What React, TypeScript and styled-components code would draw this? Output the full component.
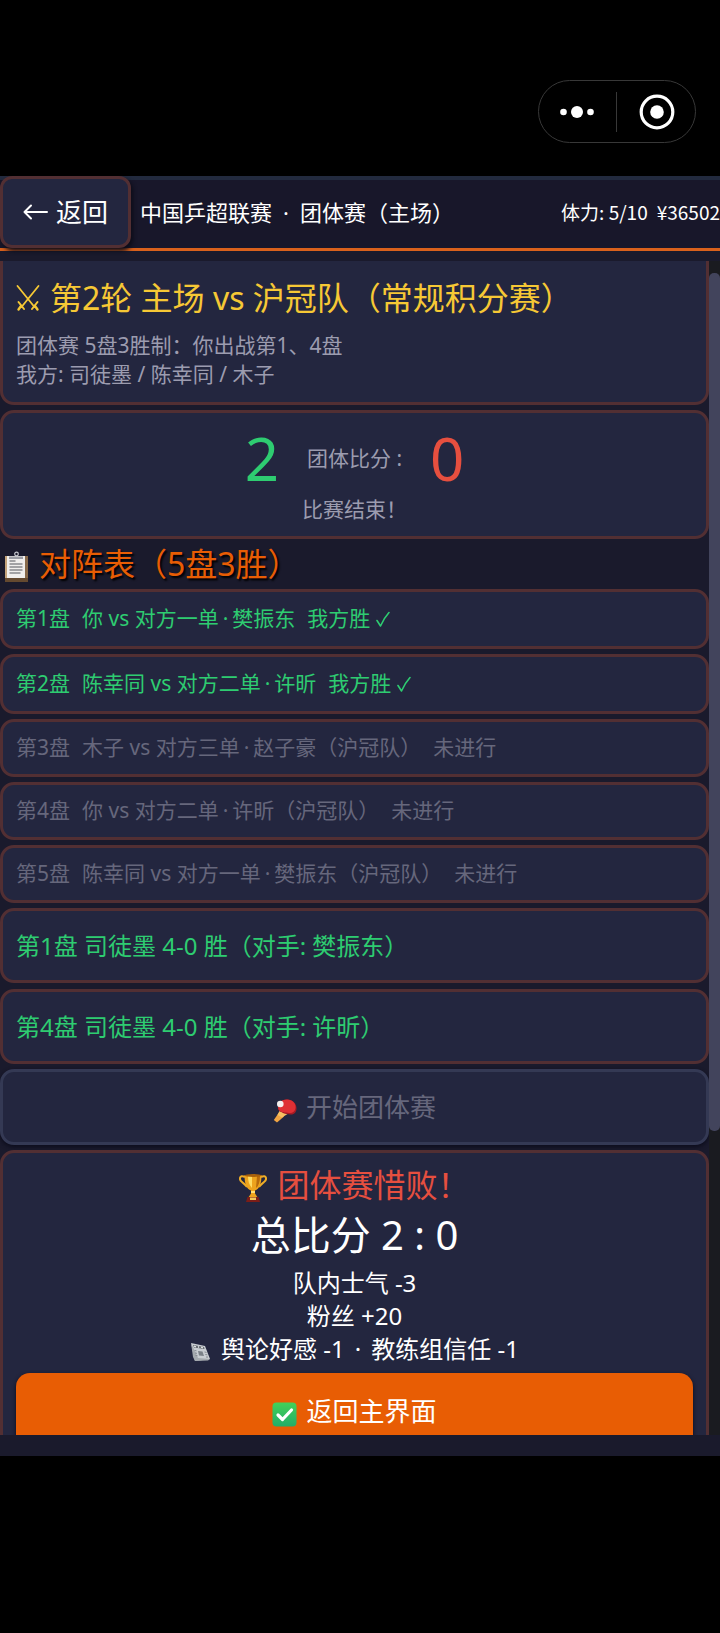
import React from 'react';
import styled, { createGlobalStyle } from 'styled-components';

const ORANGE = '#e85d04';
const EDGE = '#522f33';
const CARD = '#23263f';
const NIGHT = '#1a1a2c';
const GREEN = '#2ecc71';
const RED = '#e64f3f';
const MUTED = '#9c9caf';
const DIM = '#66677c';

const GlobalStyle = createGlobalStyle`
  * { box-sizing: border-box; }
  body { margin: 0; background: #000; }
  button { font: inherit; cursor: pointer; }
`;

const Page = styled.div`
  display: flex;
  flex-direction: column;
  height: 100vh;
  background: #000;
  color: #fff;
  font-family: 'Noto Sans', 'Noto Sans CJK SC', sans-serif;
`;

const SystemBar = styled.div`
  display: flex;
  justify-content: flex-end;
  flex: none;
  padding: 80px 24px 33px;
`;

const Capsule = styled.div`
  display: flex;
  align-items: center;
  width: 158px;
  height: 63px;
  border: 1px solid #383838;
  border-radius: 32px;
`;

const CapsuleButton = styled.button`
  display: flex;
  align-items: center;
  justify-content: center;
  flex: 1;
  height: 100%;
  padding: 0;
  border: 0;
  background: none;
`;

const CapsuleDivider = styled.span`
  width: 1px;
  height: 40px;
  margin-right: 2px;
  background: #383838;
`;

const Game = styled.div`
  display: flex;
  flex-direction: column;
  flex: 1;
  min-height: 0;
  padding-bottom: 21px;
  background: ${NIGHT};
`;

const HomeArea = styled.div`
  flex: none;
  height: 177px;
`;

const Header = styled.header`
  display: flex;
  align-items: center;
  flex: none;
  height: 75px;
  border-bottom: 3px solid #d9611c;
  background: linear-gradient(#222a3e 4px, #18172a 4px);
  white-space: nowrap;
`;

const BackButton = styled.button`
  display: flex;
  align-items: center;
  justify-content: center;
  gap: 8px;
  width: 131px;
  height: 72px;
  flex: none;
  padding: 0;
  border: 3px solid ${EDGE};
  border-radius: 12px;
  background: ${CARD};
  color: #fff;
  font-size: 26px;
  line-height: 36px;
  box-shadow: 2px 3px 4px #0c0c18;
`;

const HeaderTitle = styled.h1`
  display: flex;
  gap: 11px;
  margin: 0 0 0 9px;
  flex: 1;
  font-size: 22px;
  font-weight: 400;
  line-height: 30px;
`;

const Stats = styled.div`
  display: flex;
  gap: 9px;
  font-family: 'Noto Sans CJK SC', sans-serif;
  font-size: 19px;
  line-height: 26px;
`;

const Viewport = styled.div`
  display: flex;
  flex: 1;
  min-height: 0;
  margin-top: 10px;
  overflow: hidden;
`;

const Content = styled.main`
  flex: 1;
  min-width: 0;
`;

const Track = styled.div`
  width: 11px;
  flex: none;
  padding: 12px 0 304px;
  background: #1a1b20;
`;

const Thumb = styled.div`
  height: 100%;
  border-radius: 5px;
  background: #42445c;
`;

const Card = styled.section<{ $continued?: boolean; $centered?: boolean }>`
  padding: ${(p) => (p.$continued ? '16px 13px 13px' : '11px 13px 12px')};
  margin-bottom: 5px;
  border: 3px solid ${EDGE};
  border-top-width: ${(p) => (p.$continued ? 0 : 3)}px;
  border-radius: ${(p) => (p.$continued ? '0 0 14px 14px' : '14px')};
  background: ${CARD};
  text-align: ${(p) => (p.$centered ? 'center' : 'left')};
`;

const MatchTitle = styled.h2`
  display: flex;
  align-items: center;
  gap: 10px;
  margin: 0 0 12px;
  color: #f6c835;
  font-size: 32px;
  font-weight: 400;
  line-height: 42px;
`;

const Note = styled.p`
  margin: 0;
  color: ${MUTED};
  font-size: 21px;
  line-height: 29px;
`;

const ScoreLine = styled.div`
  display: flex;
  align-items: center;
  justify-content: center;
  gap: 28px;
  height: 68px;
  margin-bottom: 3px;
`;

const Score = styled.span<{ $color: string }>`
  color: ${(p) => p.$color};
  font-size: 60px;
  line-height: 66px;
`;

const SectionTitle = styled.h2`
  display: flex;
  align-items: center;
  gap: 10px;
  height: 50px;
  margin: -5px 0 0;
  padding-left: 4px;
  color: ${ORANGE};
  font-size: 32px;
  font-weight: 400;
  line-height: 42px;
  text-shadow: 2px 2px 2px #000;
`;

const List = styled.ul<{ $gap: number }>`
  display: flex;
  flex-direction: column;
  gap: ${(p) => p.$gap}px;
  margin: 0 0 5px;
  padding: 0;
  list-style: none;
`;

const Row = styled.li<{ $kind: 'won' | 'pending' | 'result' }>`
  display: flex;
  align-items: center;
  gap: 12px;
  height: ${(p) => ({ won: 60, pending: 58, result: 75 })[p.$kind]}px;
  padding: 0 13px 1px;
  border: 3px solid ${EDGE};
  border-radius: 14px;
  background: ${CARD};
  color: ${(p) => (p.$kind === 'pending' ? DIM : GREEN)};
  font-size: ${(p) => (p.$kind === 'result' ? 24 : 21)}px;
  line-height: ${(p) => (p.$kind === 'result' ? 33 : 29)}px;
  white-space: nowrap;
`;

const Dot = styled.span`
  padding: 0 4px;
`;

const Outcome = styled.span`
  display: flex;
  align-items: center;
  gap: 6px;
`;

const ActionButton = styled.button<{ $primary?: boolean }>`
  display: flex;
  align-items: center;
  justify-content: center;
  gap: 9px;
  width: 100%;
  height: 76px;
  margin: 0 0 5px;
  border: ${(p) => (p.$primary ? '0' : '3px solid #343954')};
  border-radius: 14px;
  background: ${(p) => (p.$primary ? ORANGE : CARD)};
  color: ${(p) => (p.$primary ? '#fff' : DIM)};
  font-size: 26px;
  line-height: 36px;
  box-shadow: 0 2px 4px #0c0c1c;
`;

const Verdict = styled.h2`
  display: flex;
  align-items: center;
  justify-content: center;
  gap: 10px;
  margin: 0;
  color: ${RED};
  font-size: 32px;
  font-weight: 400;
  line-height: 42px;
`;

const Total = styled.p`
  margin: 0 0 2px;
  font-size: 40px;
  line-height: 58px;
`;

const Effect = styled.p`
  display: flex;
  align-items: center;
  justify-content: center;
  gap: 10px;
  margin: 0;
  font-size: 24px;
  line-height: 33px;
`;

const Effects = styled.div`
  margin-bottom: 8px;
`;

/* Emoji sit a little below the optical centre of the text beside them. */
const Emoji = styled.svg`
  flex: none;
  margin-top: 6px;
`;

const BackArrow = () => (
  <svg width="25" height="18" viewBox="0 0 25 18" fill="none" stroke="currentColor" strokeWidth="2" strokeLinecap="round" strokeLinejoin="round">
    <path d="M1.500 9 H24 M8 2.500 L1.500 9 L8 15.500" />
  </svg>
);

const SwordsIcon = () => (
  <svg width="24" height="28" viewBox="0 0 24 28" fill="none" stroke="currentColor" strokeLinecap="round">
    <path d="M1.500 2 L18.500 23 M22.500 2 L5.500 23" strokeWidth="1.800" />
    <path d="M2.500 18 L8 25 M21.500 18 L16 25" strokeWidth="2" />
    <path d="M5 22 L2.500 25.500 M19 22 L21.500 25.500" strokeWidth="2.400" />
  </svg>
);

const TickIcon = () => (
  <svg width="14" height="20" viewBox="0 0 14 20" fill="none" stroke="currentColor" strokeWidth="1.600" strokeLinejoin="round" strokeLinecap="round">
    <path d="M1 11.500 L4.500 17 Q8 9 13 3.500" />
  </svg>
);

const ClipboardIcon = () => (
  <Emoji width="25" height="32" viewBox="0 0 25 32">
    <path d="M1 5h23v26H1z" fill="#87694a" />
    <path d="M1 27h23v4H1z" fill="#64492f" />
    <path d="M1 27V5h2v22z" fill="#c3a27a" />
    <path d="M3 5h18v22H3z" fill="#f0eeec" />
    <path d="M5.500 10h6M5.500 13h13M5.500 16h13M5.500 19h13M5.500 22h11" stroke="#55565c" strokeWidth="1.200" />
    <path d="M5 5.500h14V8H5z" fill="#9b9ca4" />
    <circle cx="12.500" cy="3" r="1.800" fill="none" stroke="#c8c9d0" strokeWidth="1.200" />
  </Emoji>
);

const PaddleIcon = () => (
  <Emoji width="24" height="25" viewBox="0 0 24 25">
    <path d="M6 14.500 L11 18.500 L4 24.500 L.8 22 Z" fill="#f0a443" />
    <path d="M6.500 13 L4.500 17 L9 19.500 L14.500 16 Z" fill="#f7c063" />
    <path d="M5.500 12 C3.500 5 8 1.500 14 1.500 C20 1.500 24 6 23.500 11 C23 15.500 20 17 17 16.500 C13 16 9 15.500 5.500 12 Z" fill="#a61b24" />
    <path d="M5.500 11.500 C4 5 8 1.500 14 1.500 C19.500 1.500 23 5.500 22.500 10 C22 14 19 15.500 16 15 C12 14.500 8.500 15 5.500 11.500 Z" fill="#df3034" />
    <circle cx="7.300" cy="6" r="3.300" fill="#f4efee" />
  </Emoji>
);

const TrophyIcon = () => (
  <Emoji width="28" height="30" viewBox="0 0 28 30">
    <path d="M6 4 C0 1 0 7 3 9 C5 11 6 11 8 14 M22 4 C28 1 28 7 25 9 C23 11 22 11 20 14" fill="none" stroke="#efad27" strokeWidth="2" />
    <path d="M5.500 2h17c0 9-2 14-6.500 15.500v3l3 4.500h-10l3-4.500v-3C7.500 16 5.500 11 5.500 2z" fill="#eda31d" />
    <path d="M9 3h4v12C10 12 9 8 9 3z" fill="#ffdc63" />
    <path d="M18 3h3c0 6-1.500 10-4 12z" fill="#b96b0c" />
    <ellipse cx="14" cy="2.500" rx="8.500" ry="1.500" fill="#a8610c" />
    <path d="M12 18h4v2h-4z" fill="#ffdf75" />
    <path d="M8.500 24h11l1.500 5H7z" fill="#7b1d17" />
    <path d="M11 24.500h6v2.500h-6z" fill="#f1c65a" />
  </Emoji>
);

const NewspaperIcon = () => (
  <Emoji width="21" height="20" viewBox="0 0 21 20">
    <path d="M1 1 L15 4 L20 17 L5 19 Z" fill="#c9cdd2" />
    <path d="M1 1 L3 15 L5 19 L18 18.500 L20 17 L8 16 Z" fill="#a4a9ae" />
    <path d="M3 3 L14 5 L14.500 7 L4 5.500 Z" fill="#5d6269" />
    <path d="M8 9 L12.500 9.500 L14 14 L9 13.500 Z" fill="#7b8188" />
    <path d="M4.500 8.500l2 .3M5 11l2 .3M5.500 13.500l2 .2M14.500 10l2 .4M15.300 12.500l2 .3M16 15l2 .1" stroke="#868b92" />
    <path d="M4 4l2 1M8 4.500l1 1M11 5l2 1" stroke="#edf0f2" strokeWidth="1.200" />
  </Emoji>
);

const CheckBoxIcon = () => (
  <Emoji width="25" height="25" viewBox="0 0 25 25">
    <defs>
      <linearGradient id="leaf" x1="0" y1="0" x2="0" y2="1">
        <stop offset="0" stopColor="#43d158" />
        <stop offset="1" stopColor="#23ad68" />
      </linearGradient>
    </defs>
    <rect x=".5" y=".5" width="24" height="24" rx="4" fill="url(#leaf)" />
    <path d="M6 13 L10.500 17.500 L19.500 8" fill="none" stroke="#fff" strokeWidth="3.200" strokeLinecap="round" strokeLinejoin="round" />
  </Emoji>
);

type Match = { round: string; seat: string; player: string };

const wonMatches: Match[] = [
  { round: '第1盘', seat: '你 vs 对方一单', player: '樊振东' },
  { round: '第2盘', seat: '陈幸同 vs 对方二单', player: '许昕' },
];

const pendingMatches: Match[] = [
  { round: '第3盘', seat: '木子 vs 对方三单', player: '赵子豪（沪冠队）' },
  { round: '第4盘', seat: '你 vs 对方二单', player: '许昕（沪冠队）' },
  { round: '第5盘', seat: '陈幸同 vs 对方一单', player: '樊振东（沪冠队）' },
];

const results = ['第1盘 司徒墨 4-0 胜（对手: 樊振东）', '第4盘 司徒墨 4-0 胜（对手: 许昕）'];

const Pairing = ({ match }: { match: Match }) => (
  <span>
    {match.seat}
    <Dot>·</Dot>
    {match.player}
  </span>
);

export default function App() {
  return (
    <Page lang="zh-CN">
      <GlobalStyle />
      <SystemBar>
        <Capsule>
          <CapsuleButton aria-label="更多">
            <svg width="34" height="14" viewBox="0 0 34 14" fill="#fff">
              <circle cx="3.500" cy="7" r="3.300" />
              <circle cx="17" cy="7" r="6" />
              <circle cx="30.500" cy="7" r="3.300" />
            </svg>
          </CapsuleButton>
          <CapsuleDivider />
          <CapsuleButton aria-label="关闭">
            <svg width="36" height="36" viewBox="0 0 36 36">
              <circle cx="18" cy="18" r="15.800" fill="none" stroke="#fff" strokeWidth="3.200" />
              <circle cx="18" cy="18" r="6.800" fill="#fff" />
            </svg>
          </CapsuleButton>
        </Capsule>
      </SystemBar>

      <Game>
        <Header>
          <BackButton>
            <BackArrow />
            返回
          </BackButton>
          <HeaderTitle>
            <span>中国乒超联赛</span>
            <span>·</span>
            <span>团体赛（主场）</span>
          </HeaderTitle>
          <Stats>
            <span>体力: 5/10</span>
            <span>¥36502</span>
          </Stats>
        </Header>

        <Viewport>
          <Content>
            <Card $continued>
              <MatchTitle>
                <SwordsIcon />
                第2轮 主场 vs 沪冠队（常规积分赛）
              </MatchTitle>
              <Note>团体赛 5盘3胜制：你出战第1、4盘</Note>
              <Note>我方: 司徒墨 / 陈幸同 / 木子</Note>
            </Card>

            <Card $centered>
              <ScoreLine>
                <Score $color={GREEN}>2</Score>
                <Note>团体比分 :</Note>
                <Score $color={RED}>0</Score>
              </ScoreLine>
              <Note>比赛结束！</Note>
            </Card>

            <SectionTitle>
              <ClipboardIcon />
              对阵表（5盘3胜）
            </SectionTitle>

            <List $gap={5}>
              {wonMatches.map((m) => (
                <Row key={m.round} $kind="won">
                  <span>{m.round}</span>
                  <Pairing match={m} />
                  <Outcome>
                    我方胜
                    <TickIcon />
                  </Outcome>
                </Row>
              ))}
              {pendingMatches.map((m) => (
                <Row key={m.round} $kind="pending">
                  <span>{m.round}</span>
                  <Pairing match={m} />
                  <span>未进行</span>
                </Row>
              ))}
            </List>

            <List $gap={6}>
              {results.map((text) => (
                <Row key={text} $kind="result">
                  {text}
                </Row>
              ))}
            </List>

            <ActionButton disabled>
              <PaddleIcon />
              开始团体赛
            </ActionButton>

            <Card $centered>
              <Verdict>
                <TrophyIcon />
                团体赛惜败！
              </Verdict>
              <Total>总比分 2 : 0</Total>
              <Effects>
                <Effect>队内士气 -3</Effect>
                <Effect>粉丝 +20</Effect>
                <Effect>
                  <NewspaperIcon />
                  <span>舆论好感 -1</span>
                  <span>·</span>
                  <span>教练组信任 -1</span>
                </Effect>
              </Effects>
              <ActionButton $primary>
                <CheckBoxIcon />
                返回主界面
              </ActionButton>
            </Card>
          </Content>
          <Track>
            <Thumb />
          </Track>
        </Viewport>
      </Game>
      <HomeArea />
    </Page>
  );
}
